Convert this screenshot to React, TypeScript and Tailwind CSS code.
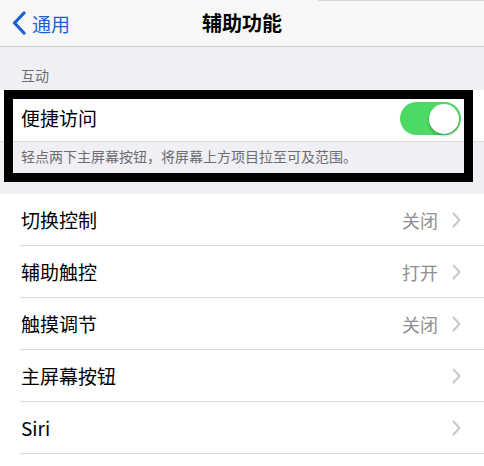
import React from 'react';

const font = { fontFamily: '"Noto Sans CJK SC", "Noto Sans", sans-serif' };

function Chevron() {
  return (
    <svg width="9" height="16" viewBox="0 0 9 16" className="shrink-0">
      <path d="M1.5 1.5 L7.5 8 L1.5 14.5" fill="none" stroke="#c7c7cc" strokeWidth="2" strokeLinecap="round" strokeLinejoin="round" />
    </svg>
  );
}

const rows = [
  { label: '切换控制', value: '关闭' },
  { label: '辅助触控', value: '打开' },
  { label: '触摸调节', value: '关闭' },
  { label: '主屏幕按钮', value: '' },
  { label: 'Siri', value: '' },
];

export default function App() {
  return (
    <div className="relative w-[484px] h-[466px] overflow-hidden bg-[#efeff4] text-black flex flex-col" style={font}>
      {/* nav bar */}
      <div className="relative h-[47px] shrink-0 bg-[#f7f7f7] border-b border-[#c8c7cc] flex items-center">
        <div className="absolute top-0 left-[318px] right-0 h-px bg-[#d8d8d8]" />
        <div className="flex items-center pl-[11px] text-[#1b5fd3]">
          <svg width="16" height="24" viewBox="0 0 16 24">
            <path d="M13 2 L3.5 12 L13 22" fill="none" stroke="#1b5fd3" strokeWidth="3.2" strokeLinecap="round" strokeLinejoin="round" />
          </svg>
          <span className="ml-[5px] text-[19px] leading-none">通用</span>
        </div>
        <div className="absolute inset-x-0 top-0 h-[46px] flex items-center justify-center pointer-events-none">
          <span className="text-[20px] font-bold leading-none">辅助功能</span>
        </div>
      </div>

      {/* section header */}
      <div className="h-[43px] shrink-0 flex items-center pl-[21px] pt-[14px] text-[14px] text-[#6d6d72]">互动</div>

      {/* reachability row */}
      <div className="h-[52px] shrink-0 bg-white flex items-center justify-between pl-[21px] pr-[23px] border-b border-[#d9d9de]">
        <span className="text-[19px] pt-[6px]">便捷访问</span>
        <div className="mt-[6px] w-[61px] h-[33px] rounded-full bg-[#4cd964] flex items-center justify-end pr-[2px]">
          <div className="w-[30px] h-[30px] rounded-full bg-white shadow-[0_2px_3px_rgba(0,0,0,0.25)]" />
        </div>
      </div>
      <div className="h-[52px] shrink-0 pl-[21px] pt-[4px] text-[14px] text-[#6d6d72]">
        轻点两下主屏幕按钮，将屏幕上方项目拉至可及范围。
      </div>

      {/* list */}
      <div className="flex-1 bg-white">
        {rows.map((r) => (
          <div key={r.label} className="h-[52px] flex items-center pl-[21px] pr-[23px] relative">
            <span className="flex-1 text-[19px]">{r.label}</span>
            {r.value && <span className="text-[18px] text-[#8e8e93] mr-[14px]">{r.value}</span>}
            <Chevron />
            <div className="absolute bottom-0 left-[20px] right-0 h-px bg-[#d9d9de]" />
          </div>
        ))}
      </div>

      {/* annotation box */}
      <div className="absolute left-[4px] top-[90px] w-[469px] h-[92px] border-[9px] border-black pointer-events-none" />
    </div>
  );
}
